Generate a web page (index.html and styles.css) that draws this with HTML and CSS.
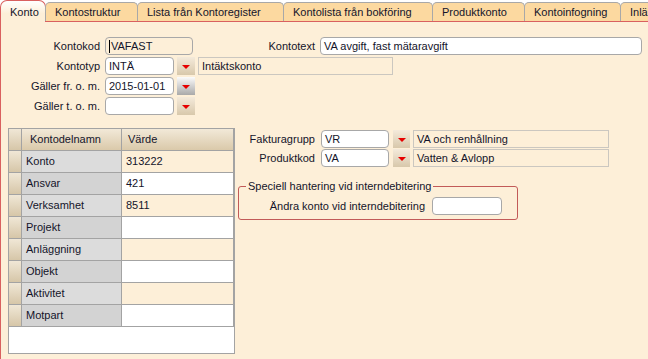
FILE: index.html
```html
<!DOCTYPE html>
<html lang="sv">
<head>
  <meta charset="UTF-8">
  <title>Konto</title>
  <link rel="stylesheet" href="styles.css">
</head>
<body>
  <div class="tabs">
    <div class="tab active">Konto</div>
    <div class="tab">Kontostruktur</div>
    <div class="tab">Lista från Kontoregister</div>
    <div class="tab">Kontolista från bokföring</div>
    <div class="tab">Produktkonto</div>
    <div class="tab">Kontoinfogning</div>
    <div class="tab">Inlä</div>
  </div>

  <div class="page">
    <div class="head-form">
      <div class="row">
        <span class="lbl">Kontokod</span>
        <div class="field code readonly"><span class="caret"></span>VAFAST</div>
        <span class="lbl text-lbl">Kontotext</span>
        <div class="field text">VA avgift, fast mätaravgift</div>
      </div>
      <div class="row">
        <span class="lbl">Kontotyp</span>
        <div class="field short">INTÄ</div>
        <div class="dd"></div>
        <div class="desc">Intäktskonto</div>
      </div>
      <div class="row">
        <span class="lbl">Gäller fr. o. m.</span>
        <div class="field short">2015-01-01</div>
        <div class="dd hover"></div>
      </div>
      <div class="row">
        <span class="lbl">Gäller t. o. m.</span>
        <div class="field short"></div>
        <div class="dd"></div>
      </div>
    </div>

    <div class="lower">
      <div class="grid-box">
        <div class="grid">
          <div class="rh"></div><div class="ch">Kontodelnamn</div><div class="ch">Värde</div>
          <div class="rh"></div><div class="name">Konto</div><div class="val">313222</div>
          <div class="rh"></div><div class="name">Ansvar</div><div class="val">421</div>
          <div class="rh"></div><div class="name">Verksamhet</div><div class="val">8511</div>
          <div class="rh"></div><div class="name">Projekt</div><div class="val"></div>
          <div class="rh"></div><div class="name">Anläggning</div><div class="val"></div>
          <div class="rh"></div><div class="name">Objekt</div><div class="val"></div>
          <div class="rh"></div><div class="name">Aktivitet</div><div class="val"></div>
          <div class="rh"></div><div class="name">Motpart</div><div class="val"></div>
        </div>
      </div>

      <div class="side">
        <div class="row side-row">
          <span class="lbl side-lbl">Fakturagrupp</span>
          <div class="field side-field">VR</div>
          <div class="dd"></div>
          <div class="desc side-desc">VA och renhållning</div>
        </div>
        <div class="row side-row">
          <span class="lbl side-lbl">Produktkod</span>
          <div class="field side-field">VA</div>
          <div class="dd"></div>
          <div class="desc side-desc">Vatten &amp; Avlopp</div>
        </div>

        <fieldset class="group">
          <legend>Speciell hantering vid interndebitering</legend>
          <div class="row">
            <span class="lbl group-lbl">Ändra konto vid interndebitering</span>
            <div class="field group-field"></div>
          </div>
        </fieldset>
      </div>
    </div>
  </div>
</body>
</html>
```

FILE: styles.css
```css
* {
  margin: 0;
  padding: 0;
  box-sizing: border-box;
}

body {
  font-family: "Liberation Sans", Arial, sans-serif;
  font-size: 11px;
  color: #14142a;
  width: 648px;
  height: 359px;
  overflow: hidden;
  background-color: #fff;
}

/* tab strip */
.tabs {
  display: flex;
  height: 22px;
  border-bottom: 1px solid #d9605f;
  background-color: #fff;
  white-space: nowrap;
}

.tab {
  flex-shrink: 0;
  height: 19px;
  margin-top: 2px;
  margin-left: -1px;
  padding-left: 9px;
  line-height: 18px;
  background-color: #fcd9a0;
  border: 1px solid #a8a8a8;
  border-bottom: none;
  border-radius: 5px 5px 0 0;
  overflow: hidden;
}

.tab:nth-child(2) { width: 93px; }
.tab:nth-child(3) { width: 147px; }
.tab:nth-child(4) { width: 150px; }
.tab:nth-child(5) { width: 93px; }
.tab:nth-child(6) { width: 97px; }
.tab:nth-child(7) { width: 40px; }

.tab.active {
  width: 46px;
  height: 22px;
  margin-top: 0;
  margin-left: 0;
  padding-top: 2px;
  background: linear-gradient(#fff, #fdefd8 60%);
  border-color: #d9605f;
  border-radius: 7px 7px 0 0;
}

/* content */
.page {
  height: 337px;
  border-left: 1px solid #d9605f;
  background-color: #fdefd8;
  padding-top: 14px;
}

.row {
  display: flex;
  align-items: center;
  height: 20px;
}

.lbl {
  width: 99px;
  text-align: right;
  white-space: nowrap;
}

.field {
  height: 18px;
  margin-left: 5px;
  padding-left: 3px;
  line-height: 16px;
  background-color: #fff;
  border: 1px solid #a8a8a8;
  border-radius: 4px;
  white-space: nowrap;
}

.field.readonly {
  background-color: #fdefd8;
}

.caret {
  display: inline-block;
  width: 1px;
  height: 13px;
  margin-right: 1px;
  background-color: #000;
  vertical-align: -3px;
}

.code { width: 88px; }
.text-lbl { width: 122px; }
.text { width: 322px; }
.short { width: 69px; }

.dd {
  position: relative;
  width: 18px;
  height: 18px;
  margin-left: 3px;
  background: linear-gradient(#f4eadb, #d8c8ab);
}

.dd.hover {
  background: linear-gradient(#fbfbfb, #a9a9a9);
}

.dd::after {
  content: "";
  position: absolute;
  left: 5px;
  top: 8px;
  border-left: 4px solid transparent;
  border-right: 4px solid transparent;
  border-top: 4px solid #e60000;
}

.desc {
  width: 195px;
  height: 18px;
  margin-left: 3px;
  padding-left: 3px;
  line-height: 16px;
  border: 1px solid #cbc7c0;
  background-color: #fdefd8;
}

/* lower part */
.lower {
  display: flex;
  margin-top: 12px;
  padding-left: 7px;
}

.grid-box {
  width: 227px;
  height: 226px;
  border: 1px solid #a3a3a3;
  background-color: #fff;
}

.grid {
  display: grid;
  grid-template-columns: 12px 99px 111px;
  grid-auto-rows: 21px;
  gap: 1px;
  width: 225px;
  background-color: #a3a3a3;
  border-right: 1px solid #a3a3a3;
  border-bottom: 1px solid #a3a3a3;
}

.grid > div {
  line-height: 21px;
  padding-left: 4px;
  white-space: nowrap;
}

.rh {
  background: linear-gradient(#f0e7d6, #d6c6a8);
}

.ch {
  background: linear-gradient(#f2e9d8, #dac9aa);
  padding-left: 8px !important;
}

.grid .ch + .ch {
  padding-left: 6px !important;
}

/* odd rows lighter, even rows darker / white */
.name {
  background-color: #dcdcdc;
}

.name:nth-child(6n+2) {
  background-color: #d3d3d3;
}

.val {
  background-color: #fdefd8;
}

.val:nth-child(6n+3) {
  background-color: #fff;
}

.side {
  margin-left: 3px;
  padding-top: 1px;
}

.side-row {
  height: 19px;
}

.side-lbl { width: 77px; }
.side-field { width: 68px; margin-left: 6px; }
.side-row .dd { width: 17px; margin-left: 4px; }
.side-desc { width: 196px; }

.group {
  width: 280px;
  margin-top: 12px;
  padding: 4px 0 4px 0;
  border: 1px solid #c25a58;
  border-radius: 3px;
}

.group legend {
  margin-left: 7px;
  padding: 0 2px;
  line-height: 14px;
}

.group .row {
  height: 18px;
}

.group-lbl { width: 186px; }
.group-field { width: 70px; margin-left: 7px; }
```
